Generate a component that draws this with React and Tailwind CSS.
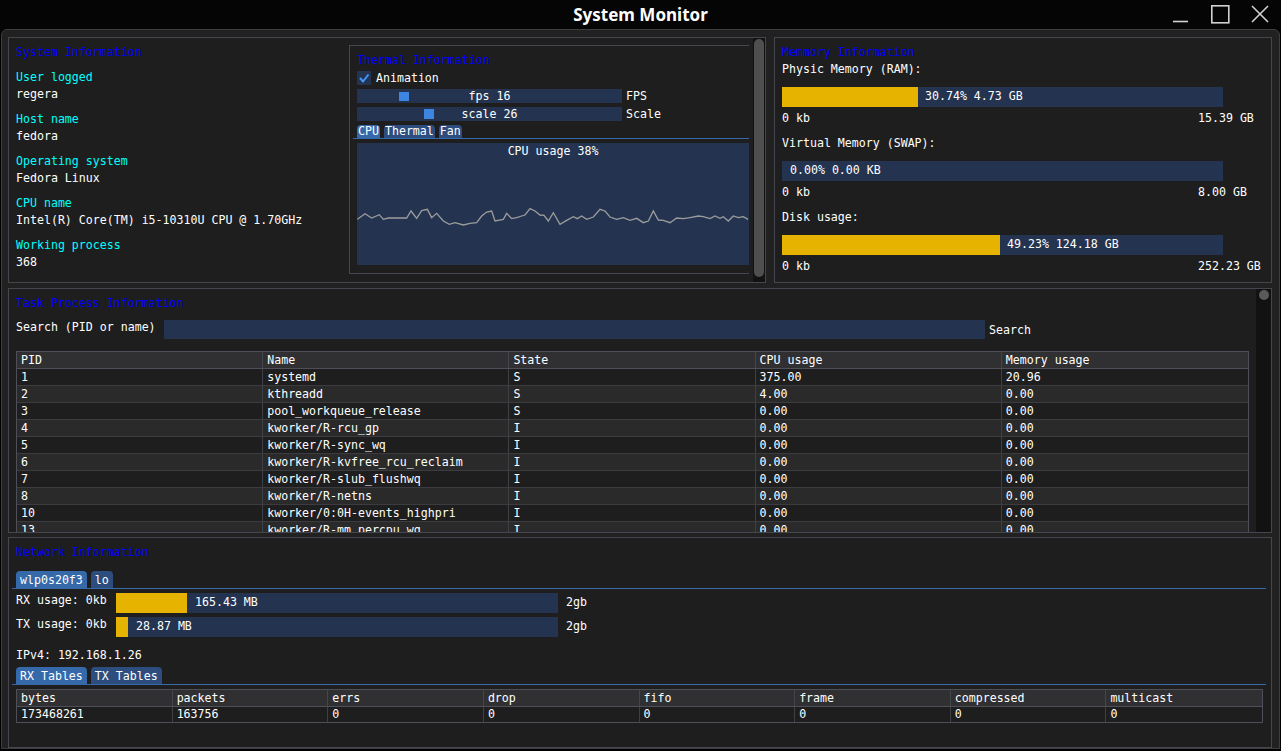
import React from "react";

const MONO = "font-['DejaVu_Sans_Mono',monospace] text-[11.6px] text-white";

const PTS = [[52,550],[75,533],[95,546],[118,536],[130,550],[145,546],[200,546],[213,525],[230,547],[245,524],[262,520],[275,545],[290,532],[310,555],[328,565],[345,560],[370,567],[390,562],[410,560],[425,540],[440,528],[455,525],[465,555],[490,550],[500,532],[515,548],[530,545],[545,540],[555,537],[570,518],[585,525],[600,537],[612,538],[625,555],[640,530],[660,565],[680,553],[700,542],[712,548],[725,540],[740,550],[760,543],[780,520],[795,525],[810,543],[830,550],[850,545],[870,553],[890,547],[910,560],[925,555],[940,525],[955,552],[970,553],[990,560],[1010,546],[1030,548],[1050,545],[1075,540],[1090,542],[1110,548],[1125,540],[1140,547],[1150,542],[1165,555],[1180,540],[1195,545],[1210,542],[1224,550]];

const PROCS = [
  ["1", "systemd", "S", "375.00", "20.96"],
  ["2", "kthreadd", "S", "4.00", "0.00"],
  ["3", "pool_workqueue_release", "S", "0.00", "0.00"],
  ["4", "kworker/R-rcu_gp", "I", "0.00", "0.00"],
  ["5", "kworker/R-sync_wq", "I", "0.00", "0.00"],
  ["6", "kworker/R-kvfree_rcu_reclaim", "I", "0.00", "0.00"],
  ["7", "kworker/R-slub_flushwq", "I", "0.00", "0.00"],
  ["8", "kworker/R-netns", "I", "0.00", "0.00"],
  ["10", "kworker/0:0H-events_highpri", "I", "0.00", "0.00"],
  ["13", "kworker/R-mm_percpu_wq", "I", "0.00", "0.00"],
];

function Tab({ label, active, tall }) {
  return (
    <div
      className={`rounded-t-[4px] ${tall ? "px-[4px] h-[17px] leading-[18px]" : "px-[1px] h-[13px] leading-[13px]"} ${
        active ? "bg-[#3569aa]" : "bg-[#2c4d7e]"
      }`}
    >
      {label}
    </div>
  );
}

function InfoGroup({ label, value }) {
  return (
    <div className="mt-[8px]">
      <div className="text-[#00ffff] leading-[17px]">{label}</div>
      <div className="leading-[17px]">{value}</div>
    </div>
  );
}

function MemBar({ fill, text }) {
  return (
    <div className="mt-[9px] w-[441px] h-[20px] bg-[#243450] flex items-center">
      {fill ? <div className="h-full bg-[#e6b400]" style={{ width: fill }} /> : null}
      <span className={fill ? "ml-[7px]" : "ml-[8px]"}>{text}</span>
    </div>
  );
}

function RangeRow({ max }) {
  return (
    <div className="mt-[3px] flex leading-[17px]">
      <span className="w-[416px]">0 kb</span>
      <span>{max}</span>
    </div>
  );
}

export default function App() {
  const poly = PTS.map(([x, y]) => `${(x - 51) / 3},${y / 3 - 107}`).join(" ");
  return (
    <div className={`w-[1281px] h-[751px] bg-black overflow-hidden ${MONO}`}>
      {/* title bar */}
      <div className="h-[29px] grid grid-cols-[1fr_auto_1fr] items-center bg-[#050505]">
        <div />
        <div className="font-['Noto_Sans',sans-serif] font-bold text-[17px] text-white leading-[29px]">System Monitor</div>
        <div className="flex justify-end h-full">
          <svg width="110" height="29" viewBox="0 0 110 29" fill="none" stroke="#d2d2d2" strokeWidth="1.6">
            <line x1="2" y1="21.5" x2="17" y2="21.5" />
            <rect x="40.8" y="5.8" width="17" height="17" />
            <line x1="81" y1="6" x2="97" y2="22" />
            <line x1="97" y1="6" x2="81" y2="22" />
          </svg>
        </div>
      </div>

      {/* window */}
      <div className="ml-[1px] w-[1279px] h-[720px] bg-[#212121] border border-[#3e3e3e] rounded-t-[6px] pl-[6px] pr-[7px] pt-[7px] flex flex-col">
        {/* top row */}
        <div className="flex gap-[8px] h-[246px]">
          {/* system info */}
          <div className="w-[758px] h-full bg-[#1e1e1e] border border-[#46464f] flex">
            <div className="w-[340px] pl-[7px] pt-[6px]">
              <div className="text-[#0000ff] leading-[17px]">System Information</div>
              <InfoGroup label="User logged" value="regera" />
              <InfoGroup label="Host name" value="fedora" />
              <InfoGroup label="Operating system" value="Fedora Linux" />
              <InfoGroup label="CPU name" value="Intel(R) Core(TM) i5-10310U CPU @ 1.70GHz" />
              <InfoGroup label="Working process" value="368" />
            </div>
            {/* thermal child */}
            <div className="mt-[7px] h-[229px] w-[400px] border-l border-t border-b border-[#46464f] pl-[7px] pt-[7px] flex flex-col gap-[4px] overflow-hidden">
              <div className="h-[14px] leading-[14px] text-[#0000ff]">Thermal Information</div>
              <div className="h-[14px] flex items-center">
                <div className="w-[14px] h-[14px] bg-[#243450] flex items-center justify-center">
                  <svg width="14" height="14" viewBox="0 0 14 14" fill="none" stroke="#4296fa" strokeWidth="2">
                    <polyline points="3,7 6,10.5 11.5,3.5" />
                  </svg>
                </div>
                <span className="ml-[5px] leading-[14px]">Animation</span>
              </div>
              <div className="h-[14px] flex items-center">
                <div className="relative w-[265px] h-[14px] bg-[#243450] flex items-center justify-center">
                  <div className="absolute left-[42px] top-[3px] w-[10px] h-[9px] bg-[#3d85e0]" />
                  <span className="relative leading-[14px]">fps 16</span>
                </div>
                <span className="ml-[4px] leading-[14px]">FPS</span>
              </div>
              <div className="h-[14px] flex items-center">
                <div className="relative w-[265px] h-[14px] bg-[#243450] flex items-center justify-center">
                  <div className="absolute left-[67px] top-[2px] w-[10px] h-[10px] bg-[#3d85e0]" />
                  <span className="relative leading-[14px]">scale 26</span>
                </div>
                <span className="ml-[4px] leading-[14px]">Scale</span>
              </div>
              <div className="flex flex-col">
                <div className="flex gap-[4px] items-end h-[13px]">
                  <Tab label="CPU" active />
                  <Tab label="Thermal" />
                  <Tab label="Fan" />
                </div>
                <div className="-ml-[4px] w-[396px] h-[1px] bg-[#3569aa]" />
              </div>
              <div className="relative h-[122px] w-full bg-[#243450]">
                <div className="text-center leading-[14px] pt-[1px]">CPU usage 38%</div>
                <svg className="absolute left-0 top-0" width="392" height="122" viewBox="0 0 392 122" fill="none">
                  <polyline points={poly} stroke="#9c9c9c" strokeWidth="1.3" />
                </svg>
              </div>
            </div>
            <div className="ml-[4px] w-[12px] h-full bg-[#121212] pt-[1px] pb-[5px] flex justify-center">
              <div className="w-[10px] h-full rounded-full bg-[#4f4f4f]" />
            </div>
          </div>

          {/* memory */}
          <div className="flex-1 h-full bg-[#1e1e1e] border border-[#46464f] pl-[7px] pt-[6px]">
            <div className="text-[#0000ff] leading-[17px]">Memmory Information</div>
            <div className="leading-[17px]">Physic Memory (RAM):</div>
            <div className="mt-[9px] w-[441px] h-[20px] bg-[#243450] flex items-center">
              <div className="h-full w-[136px] bg-[#e6b400]" />
              <span className="ml-[7px]">30.74% 4.73 GB</span>
            </div>
            <RangeRow max="15.39 GB" />
            <div className="mt-[8px] leading-[17px]">Virtual Memory (SWAP):</div>
            <MemBar text="0.00% 0.00 KB" />
            <RangeRow max="8.00 GB" />
            <div className="mt-[8px] leading-[17px]">Disk usage:</div>
            <MemBar fill="218px" text="49.23% 124.18 GB" />
            <RangeRow max="252.23 GB" />
          </div>
        </div>

        {/* task process */}
        <div className="mt-[5px] h-[245px] bg-[#1e1e1e] border border-[#46464f] flex">
          <div className="flex-1 overflow-hidden pl-[7px] pt-[6px]">
            <div className="text-[#0000ff] leading-[17px]">Task Process Information</div>
            <div className="mt-[8px] flex items-center h-[19px]">
              <span className="w-[148px] -mt-[3px]">Search (PID or name)</span>
              <div className="w-[821px] h-[19px] bg-[#243450]" />
              <span className="ml-[4px] mt-[2px]">Search</span>
            </div>
            <div className="mt-[12px] w-[1233px] border border-[#4f4f59]">
              <div className="grid grid-cols-5 h-[17px] bg-[#303033] border-b border-[#4f4f59]">
                {["PID", "Name", "State", "CPU usage", "Memory usage"].map((h, i) => (
                  <div key={h} className={`pl-[4px] leading-[16px] ${i < 4 ? "border-r border-[#45454d]" : ""}`}>{h}</div>
                ))}
              </div>
              {PROCS.map((r, ri) => (
                <div
                  key={r[0]}
                  className={`grid grid-cols-5 h-[17px] border-b border-[#3b3b40] ${ri % 2 === 1 ? "bg-[#2a2a2a]" : "bg-[#1e1e1e]"}`}
                >
                  {r.map((c, i) => (
                    <div key={i} className={`pl-[4px] leading-[16px] ${i < 4 ? "border-r border-[#3f3f46]" : ""}`}>{c}</div>
                  ))}
                </div>
              ))}
            </div>
          </div>
          <div className="w-[15px] h-full bg-[#121212] pt-[1px] pl-[3px]">
            <div className="w-[10px] h-[10px] rounded-full bg-[#5a5a5a]" />
          </div>
        </div>

        {/* network */}
        <div className="mt-[4px] h-[211px] bg-[#1e1e1e] border border-[#46464f] pl-[7px] pt-[6px]">
          <div className="text-[#0000ff] leading-[17px]">Network Information</div>
          <div className="mt-[10px] flex gap-[4px] items-end h-[17px]">
            <Tab label="wlp0s20f3" active tall />
            <Tab label="lo" tall />
          </div>
          <div className="-ml-[4px] w-[1254px] h-[1px] bg-[#3569aa]" />
          <div className="mt-[4px] flex items-center h-[20px]">
            <span className="w-[100px] -mt-[5px]">RX usage: 0kb</span>
            <div className="w-[442px] h-[20px] bg-[#243450] flex items-center">
              <div className="h-full w-[71px] bg-[#e6b400]" />
              <span className="ml-[8px]">165.43 MB</span>
            </div>
            <span className="ml-[8px]">2gb</span>
          </div>
          <div className="mt-[4px] flex items-center h-[20px]">
            <span className="w-[100px] -mt-[5px]">TX usage: 0kb</span>
            <div className="w-[442px] h-[20px] bg-[#243450] flex items-center">
              <div className="h-full w-[12px] bg-[#e6b400]" />
              <span className="ml-[8px]">28.87 MB</span>
            </div>
            <span className="ml-[8px]">2gb</span>
          </div>
          <div className="mt-[10px] leading-[17px]">IPv4: 192.168.1.26</div>
          <div className="mt-[3px] flex gap-[4px] items-end h-[17px]">
            <Tab label="RX Tables" active tall />
            <Tab label="TX Tables" tall />
          </div>
          <div className="-ml-[4px] w-[1254px] h-[1px] bg-[#3569aa]" />
          <div className="mt-[4px] w-[1247px] border border-[#4f4f59]">
            <div className="grid grid-cols-8 h-[17px] bg-[#303033] border-b border-[#4f4f59]">
              {["bytes", "packets", "errs", "drop", "fifo", "frame", "compressed", "multicast"].map((h, i) => (
                <div key={h} className={`pl-[4px] leading-[16px] ${i < 7 ? "border-r border-[#45454d]" : ""}`}>{h}</div>
              ))}
            </div>
            <div className="grid grid-cols-8 h-[15px] bg-[#1e1e1e]">
              {["173468261", "163756", "0", "0", "0", "0", "0", "0"].map((c, i) => (
                <div key={i} className={`pl-[4px] leading-[15px] ${i < 7 ? "border-r border-[#3f3f46]" : ""}`}>{c}</div>
              ))}
            </div>
          </div>
        </div>
      </div>
    </div>
  );
}
